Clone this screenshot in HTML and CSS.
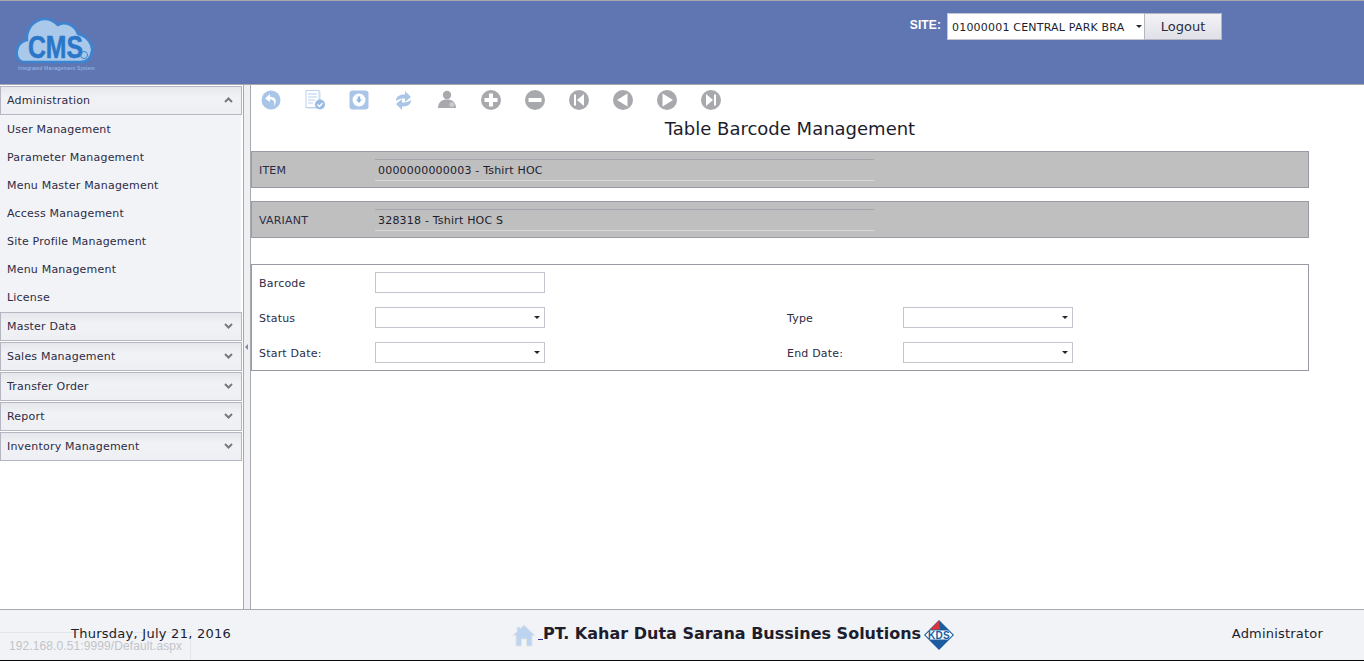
FILE: index.html
```html
<!DOCTYPE html>
<html lang="en">
<head>
    <meta charset="UTF-8">
    <title>Table Barcode Management</title>
    <link rel="stylesheet" href="styles.css">
</head>
<body>
    <div id="header">
        <svg class="logo" width="80" height="60" viewBox="0 0 80 60">
            <path d="M10 46 C3 46 1 40 2 34 C3 28 8 25 12 24 C11 12 20 3 30 3 C36 3 40 6 43 9 C49 5 60 8 63 18 C72 20 78 28 77 35 C76 42 72 46 66 46 Z" fill="#a9c8ea" stroke="#3c84d0" stroke-width="2.5"/>
            <text x="13" y="42" class="logo-text" textLength="55" lengthAdjust="spacingAndGlyphs">CMS</text>
            <circle cx="69" cy="39" r="3.5" fill="none" stroke="#3c84d0"/>
            <text x="3" y="54" class="logo-small">Integrated Management System</text>
        </svg>
        <div class="site-box">
            <span class="site-label">SITE:</span>
            <div class="site-select">01000001 CENTRAL PARK BRA<span class="arrow"></span></div>
            <div class="logout">Logout</div>
        </div>
    </div>

    <div id="middle">
        <div id="sidebar">
            <div class="nav-head first">Administration<svg class="chev" width="9" height="6" viewBox="0 0 9 6"><path d="M1 5 L4.5 1.5 L8 5" fill="none" stroke="#77787f" stroke-width="2"/></svg></div>
            <div class="nav-items">
                <div class="nav-item">User Management</div>
                <div class="nav-item">Parameter Management</div>
                <div class="nav-item">Menu Master Management</div>
                <div class="nav-item">Access Management</div>
                <div class="nav-item">Site Profile Management</div>
                <div class="nav-item">Menu Management</div>
                <div class="nav-item">License</div>
            </div>
            <div class="nav-head">Master Data<svg class="chev" width="9" height="6" viewBox="0 0 9 6"><path d="M1 1 L4.5 4.5 L8 1" fill="none" stroke="#77787f" stroke-width="2"/></svg></div>
            <div class="nav-head">Sales Management<svg class="chev" width="9" height="6" viewBox="0 0 9 6"><path d="M1 1 L4.5 4.5 L8 1" fill="none" stroke="#77787f" stroke-width="2"/></svg></div>
            <div class="nav-head">Transfer Order<svg class="chev" width="9" height="6" viewBox="0 0 9 6"><path d="M1 1 L4.5 4.5 L8 1" fill="none" stroke="#77787f" stroke-width="2"/></svg></div>
            <div class="nav-head">Report<svg class="chev" width="9" height="6" viewBox="0 0 9 6"><path d="M1 1 L4.5 4.5 L8 1" fill="none" stroke="#77787f" stroke-width="2"/></svg></div>
            <div class="nav-head">Inventory Management<svg class="chev" width="9" height="6" viewBox="0 0 9 6"><path d="M1 1 L4.5 4.5 L8 1" fill="none" stroke="#77787f" stroke-width="2"/></svg></div>
        </div>
        <div id="splitter"><span class="split-arrow"></span></div>

        <div id="content">
            <div class="toolbar">
                <svg class="tool soft" viewBox="0 0 22 22"><circle cx="11" cy="11" r="9.5" fill="#a9c6e8"/><path d="M10 5 L5 9.5 L10 13 V10.5 C13 10.5 15 12 14 17 C17 13 16.5 7.8 10 7.8 Z" fill="#fff"/></svg>
                <svg class="tool soft" viewBox="0 0 22 22"><rect x="4" y="3" width="12" height="16" fill="#fff" stroke="#cbdcf0"/><rect x="2" y="1.5" width="13" height="17" fill="#fff" stroke="#bcd2ec"/><path d="M4 5 H13 M4 8 H13 M4 11 H11 M4 14 H9" stroke="#b6cfeb"/><circle cx="16" cy="15.5" r="5" fill="#98bce4"/><path d="M13.5 15.5 L15.5 17.5 L18.5 14" fill="none" stroke="#fff" stroke-width="1.4"/></svg>
                <svg class="tool soft" viewBox="0 0 22 22"><rect x="1.5" y="1.5" width="19" height="19" rx="3" fill="#a9c6e8"/><circle cx="11" cy="11" r="6.5" fill="#fff"/><path d="M9.8 7.5 H12.2 V10.5 H14 L11 14 L8 10.5 H9.8 Z" fill="#8fb6e2"/></svg>
                <svg class="tool soft" viewBox="0 0 22 22"><path id="sync-top" d="M4 12 C4 7 8 5.5 13 5.5 V2 L19 8 L13 13 V9.5 C9 9.5 7 10 4 12 Z" fill="#a9c6e8"/><path d="M4 12 C4 7 8 5.5 13 5.5 V2 L19 8 L13 13 V9.5 C9 9.5 7 10 4 12 Z" fill="#a9c6e8" transform="rotate(180 11.5 11.5)"/></svg>
                <svg class="tool soft" viewBox="0 0 22 22"><circle cx="11" cy="6" r="4.2" fill="#a8a9ad"/><path d="M2 19 C2 13 6 10.5 11 10.5 C16 10.5 20 13 20 19 Z" fill="#a8a9ad"/><circle cx="16" cy="15.5" r="2.6" fill="#c8c9cc"/></svg>
                <svg class="tool" viewBox="0 0 22 22"><circle cx="11" cy="11" r="10" fill="#a8a9ad"/><path d="M9 4.5 H13 V9 H17.5 V13 H13 V17.5 H9 V13 H4.5 V9 H9 Z" fill="#fff"/></svg>
                <svg class="tool" viewBox="0 0 22 22"><circle cx="11" cy="11" r="10" fill="#a8a9ad"/><rect x="4.5" y="9" width="13" height="4" fill="#fff"/></svg>
                <svg class="tool" viewBox="0 0 22 22"><circle cx="11" cy="11" r="10" fill="#a8a9ad"/><rect x="6" y="5.5" width="2" height="11" fill="#fff"/><path d="M16 5 V17 L9 11 Z" fill="#fff"/></svg>
                <svg class="tool" viewBox="0 0 22 22"><circle cx="11" cy="11" r="10" fill="#a8a9ad"/><path d="M15.5 4.5 V17.5 L5 11 Z" fill="#fff"/></svg>
                <svg class="tool" viewBox="0 0 22 22"><circle cx="11" cy="11" r="10" fill="#a8a9ad"/><path d="M6.5 4.5 V17.5 L17 11 Z" fill="#fff"/></svg>
                <svg class="tool" viewBox="0 0 22 22"><circle cx="11" cy="11" r="10" fill="#a8a9ad"/><rect x="14" y="5.5" width="2" height="11" fill="#fff"/><path d="M6 5 V17 L13 11 Z" fill="#fff"/></svg>
            </div>
            <h1 class="title">Table Barcode Management</h1>

            <div class="band">
                <span class="lbl">ITEM</span>
                <div class="band-value">0000000000003 - Tshirt HOC</div>
            </div>
            <div class="band">
                <span class="lbl">VARIANT</span>
                <div class="band-value">328318 - Tshirt HOC S</div>
            </div>

            <div class="form-box">
                <div class="form-row">
                    <div class="field">
                        <span class="lbl">Barcode</span>
                        <div class="box"></div>
                    </div>
                </div>
                <div class="form-row">
                    <div class="field">
                        <span class="lbl">Status</span>
                        <div class="box"><span class="arrow"></span></div>
                    </div>
                    <div class="field">
                        <span class="lbl">Type</span>
                        <div class="box"><span class="arrow"></span></div>
                    </div>
                </div>
                <div class="form-row">
                    <div class="field">
                        <span class="lbl">Start Date:</span>
                        <div class="box"><span class="arrow"></span></div>
                    </div>
                    <div class="field">
                        <span class="lbl">End Date:</span>
                        <div class="box"><span class="arrow"></span></div>
                    </div>
                </div>
            </div>
        </div>
    </div>

    <div id="footer">
        <div class="foot-date">Thursday, July 21, 2016</div>
        <div class="foot-center">
            <svg class="home" width="24" height="24" viewBox="0 0 24 24"><path d="M12 1 L23 11.5 H20 V22 H14.5 V15 H9.5 V22 H4 V11.5 H1 L5 7.5 V3 H8 V4.8 Z" fill="#bcd4f0" stroke="#e2e4e8"/></svg>
            <span class="home-line"></span>
            <span class="company">PT. Kahar Duta Sarana Bussines Solutions</span>
            <svg class="kds" width="30" height="30" viewBox="0 0 30 30">
                <path d="M15 0 L30 15 L15 30 L0 15 Z" fill="#1a5c9e"/>
                <path d="M6 9.5 L15 0.5 L16 9.5 Z" fill="#d9343a"/>
                <path d="M1.5 15 L6 10.5 H24 L28.5 15 L24 19.5 H6 Z" fill="#fff"/>
                <text x="15" y="18.7" class="kds-text">KDS</text>
            </svg>
        </div>
        <div class="foot-user">Administrator</div>
    </div>

    <div class="status-tip">192.168.0.51:9999/Default.aspx</div>
</body>
</html>
```

FILE: styles.css
```css
/* Page frame */
html, body {
    margin: 0;
    padding: 0;
    height: 661px;
    overflow: hidden;
}

body {
    display: flex;
    flex-direction: column;
    position: relative;
    background-color: #fff;
    font-family: "DejaVu Sans", Verdana, sans-serif;
    font-size: 11px;
    letter-spacing: 0.2px;
    color: #1d1d2d;
}

/* Header */
#header {
    height: 83px;
    flex: none;
    display: flex;
    justify-content: space-between;
    background-color: #6076b3;
    border-top: 1px solid #a8a8ae;
    border-bottom: 1px solid #a8a8ae;
}

.logo {
    margin: 15px 0 0 15px;
}

.logo-text {
    font-family: "Liberation Sans", Arial, sans-serif;
    font-size: 31px;
    font-weight: bold;
    letter-spacing: 0;
    fill: #2a76c8;
    stroke: #2a76c8;
    stroke-width: 0.5px;
}

.logo-small {
    font-family: "Liberation Sans", Arial, sans-serif;
    font-size: 5px;
    letter-spacing: 0.2px;
    fill: #9cc0ea;
}

.site-box {
    display: flex;
    align-items: flex-start;
    margin: 12px 142px 0 0;
}

.site-label {
    margin: 5px 6px 0 0;
    color: #fff;
    font-family: "Liberation Sans", Arial, sans-serif;
    font-weight: bold;
    font-size: 12px;
    letter-spacing: 0.1px;
}

.site-select {
    position: relative;
    width: 192px;
    height: 25px;
    padding-left: 4px;
    line-height: 27px;
    background-color: #fff;
    border: 1px solid #c4c6d0;
    border-right: none;
    color: #1d1d2d;
}

.logout {
    width: 76px;
    height: 25px;
    line-height: 25px;
    text-align: center;
    font-size: 13px;
    letter-spacing: 0;
    color: #2b2b3a;
    background: linear-gradient(#f3f3f6, #dfe0e8);
    border: 1px solid #b4b6c2;
}

/* Little down arrow used on every drop down */
.arrow {
    position: absolute;
    right: 4px;
    top: 50%;
    margin-top: -2px;
    border-left: 3.5px solid transparent;
    border-right: 3.5px solid transparent;
    border-top: 3.5px solid #26262e;
}

.site-select .arrow {
    right: 2px;
    border-left-width: 3px;
    border-right-width: 3px;
    border-top-width: 3px;
}

/* Middle section */
#middle {
    flex: 1;
    display: flex;
    min-height: 0;
}

#sidebar {
    width: 243px;
    flex: none;
    padding-top: 1px;
    background-color: #fff;
}

.nav-head {
    position: relative;
    height: 27px;
    line-height: 28px;
    padding-left: 6px;
    margin-bottom: 1px;
    width: 234px;
    color: #2c2c46;
    background: linear-gradient(#e6e7ec, #f1f2f5 40%, #eeeff3);
    border: 1px solid #b4b6c2;
}

.nav-head.first {
    margin-bottom: 0;
}

.chev {
    position: absolute;
    right: 8px;
    top: 10px;
}

.nav-items {
    width: 241px;
    background-color: #f2f3f6;
    padding-top: 1px;
}

.nav-item {
    height: 28px;
    line-height: 28px;
    padding-left: 7px;
    color: #2c2c46;
}

#splitter {
    width: 6px;
    flex: none;
    display: flex;
    align-items: center;
    background-color: #eef0f4;
    border-left: 1px solid #a8a8ae;
    border-right: 1px solid #a8a8ae;
}

.split-arrow {
    margin: 0 0 0 1px;
    border-top: 3px solid transparent;
    border-bottom: 3px solid transparent;
    border-right: 3px solid #8a8a94;
}

/* Content area */
#content {
    flex: 1;
    min-width: 0;
    padding-right: 55px;
}

.toolbar {
    display: flex;
    gap: 22px;
    padding: 4px 0 0 9px;
    height: 24px;
}

.tool {
    width: 22px;
    height: 22px;
}

.soft {
    filter: blur(0.4px);
}

.title {
    margin: 0 0 7px 0;
    padding-left: 20px;
    height: 31px;
    line-height: 31px;
    text-align: center;
    font-size: 18px;
    font-weight: normal;
    letter-spacing: 0;
    color: #1d1d2d;
}

.band {
    display: flex;
    align-items: center;
    height: 35px;
    margin-bottom: 13px;
    padding-left: 7px;
    background-color: #bfbfbf;
    border: 1px solid #9a9aa4;
}

.lbl {
    width: 116px;
    flex: none;
    padding-top: 2px;
    color: #2c2c46;
}

.band-value {
    width: 496px;
    height: 20px;
    line-height: 21px;
    padding-left: 3px;
    color: #1d1d2d;
    border-top: 1px solid #a5a5ae;
    border-bottom: 1px solid #d8d8de;
}

.form-box {
    margin-top: 26px;
    height: 105px;
    padding-left: 7px;
    border: 1px solid #9a9aa4;
}

.form-row {
    display: flex;
    height: 35px;
    align-items: center;
}

.field {
    display: flex;
    align-items: center;
    width: 528px;
}

.field + .field {
    width: auto;
}

.box {
    position: relative;
    width: 168px;
    height: 19px;
    background-color: #fff;
    border: 1px solid #c2c4ce;
}

/* Footer */
#footer {
    height: 50px;
    flex: none;
    display: flex;
    align-items: center;
    background-color: #f1f3f6;
    border-top: 1px solid #a8a8ae;
    border-bottom: 1px solid #0a0a0a;
    font-size: 13px;
}

.foot-date {
    position: relative;
    z-index: 2;
    width: 512px;
    flex: none;
    padding-left: 71px;
    box-sizing: border-box;
    margin-top: -4px;
    letter-spacing: 0.26px;
}

.foot-center {
    display: flex;
    align-items: center;
}

.home {
    margin-top: 1px;
}

.home-line {
    width: 5px;
    height: 1px;
    margin: 8px 0 0 2px;
    background-color: #3a2aa0;
}

.company {
    font-size: 16px;
    font-weight: bold;
    letter-spacing: 0;
    margin-top: -4px;
}

.kds {
    margin-left: 3px;
}

.kds-text {
    font-family: "Liberation Sans", Arial, sans-serif;
    font-size: 10px;
    font-weight: bold;
    letter-spacing: 0.3px;
    text-anchor: middle;
    fill: #1a5c9e;
}

.foot-user {
    margin-left: auto;
    margin-right: 41px;
    margin-top: -4px;
}

/* Browser status bubble over the footer */
.status-tip {
    position: absolute;
    left: 0;
    bottom: 1px;
    width: 181px;
    height: 27px;
    padding-left: 9px;
    line-height: 26px;
    font-family: "Liberation Sans", Arial, sans-serif;
    font-size: 12px;
    letter-spacing: 0.1px;
    color: #c3c4c8;
    background-color: rgba(241, 243, 246, 0.6);
    border-top: 1px solid #e4e5e8;
    border-right: 1px solid #e4e5e8;
}
```
